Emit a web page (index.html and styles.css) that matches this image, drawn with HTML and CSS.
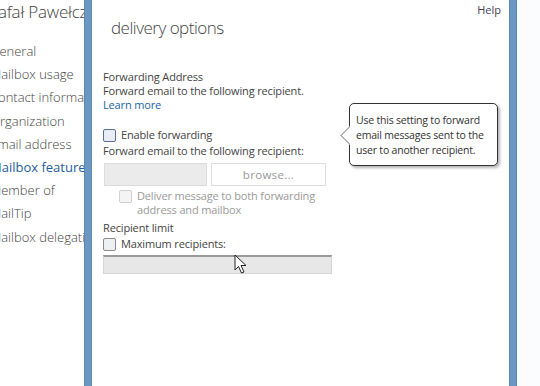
FILE: index.html
```html
<!DOCTYPE html>
<html>
<head>
<meta charset="utf-8">
<link rel="stylesheet" href="styles.css">
</head>
<body>
<div class="screen">
  <aside class="nav">
    <div class="nav-title">Rafał Pawełczyk</div>
    <ul class="nav-list">
      <li>General</li>
      <li>Mailbox usage</li>
      <li>Contact information</li>
      <li>Organization</li>
      <li>Email address</li>
      <li class="active">Mailbox features</li>
      <li>Member of</li>
      <li>MailTip</li>
      <li>Mailbox delegation</li>
    </ul>
  </aside>
  <div class="bar"></div>
  <main class="dialog">
    <header class="dlg-head">
      <h1 class="dlg-title">delivery options</h1>
      <a class="help">Help</a>
    </header>
    <section class="section">
      <div class="label">Forwarding Address</div>
      <div class="label">Forward email to the following recipient.</div>
      <a class="link">Learn more</a>
    </section>
    <section class="section fwd">
      <label class="check"><span class="box"></span>Enable forwarding</label>
      <div class="label">Forward email to the following recipient:</div>
      <div class="row">
        <div class="input"></div>
        <div class="button">browse...</div>
      </div>
      <label class="check sub disabled"><span class="box"></span><span>Deliver message to both forwarding<br>address and mailbox</span></label>
    </section>
    <section class="section limit">
      <div class="label">Recipient limit</div>
      <label class="check"><span class="box"></span>Maximum recipients:</label>
      <div class="input wide"></div>
    </section>
    <div class="tip">
      <span class="tip-arrow"></span>
      <span class="tip-text">Use this setting to forward email messages sent to the user to another recipient.</span>
    </div>
    <svg class="cursor" width="14" height="20" viewBox="0 0 14 20"><path d="M1 1 L1 16 L4.5 12.5 L7.5 19 L10 18 L7 11.5 L12 11.5 Z" fill="#fff" stroke="#222" stroke-width="1"/></svg>
  </main>
  <div class="bar"></div>
  <div class="rest"></div>
</div>
</body>
</html>
```
FILE: styles.css
```css
html, body { margin: 0; padding: 0; background: #fff; }
body { font-family: "Open Sans", "Noto Sans", sans-serif; color: #444; }
.screen { display: flex; width: 540px; height: 386px; overflow: hidden; }
.nav { width: 84px; flex: none; overflow: hidden; white-space: nowrap; background: #fff; }
.nav-title { font-size: 17px; font-weight: 300; color: #444; margin: 1px 0 0 -12px; line-height: 22px; letter-spacing: -0.2px; }
.nav-list { list-style: none; margin: 17px 0 0 -10px; padding: 0; font-size: 13px; font-weight: 300; color: #444; }
.nav-list li { height: 23.2px; line-height: 22px; }
.nav-list li.active { color: #1f5d9e; font-weight: 400; }
.bar { width: 8px; flex: none; background: #6a98c1; box-shadow: inset 1px 0 0 #5a88b3, inset -1px 0 0 #5a88b3; }
.dialog { position: relative; width: 417px; flex: none; padding: 0 0 0 11px; box-sizing: border-box; background: #fff; font-size: 11px; letter-spacing: -0.15px; }
.rest { flex: 1; background: #fbfcfd; }
.dlg-head { display: flex; justify-content: space-between; align-items: flex-start; }
.dlg-title { margin: 16px 0 0 8px; font-size: 17px; font-weight: 300; color: #444; line-height: 24px; letter-spacing: -0.5px; }
.help { margin: 3px 8px 0 0; font-size: 11px; color: #445; line-height: 14px; letter-spacing: 0; }
.section { display: flex; flex-direction: column; align-items: flex-start; }
.dlg-head + .section { margin-top: 30px; }
.label { line-height: 14px; color: #444; }
.link { color: #2064a8; line-height: 14px; }
.fwd { margin-top: 16px; }
.check { display: flex; align-items: flex-start; line-height: 14px; color: #444; }
.box { width: 11px; height: 11px; border: 1px solid #8a8a8a; background: #eef0f3; border-radius: 2px; margin: 1px 5px 0 0; flex: none; }
.fwd > .check:first-child .box { border-color: #5c6f9a; background: #e9ecf2; }
.fwd .label { margin-top: 2px; }
.row { display: flex; gap: 4px; margin: 5px 0 0 1px; }
.input { width: 101px; height: 21px; background: #ebebeb; border: 1px solid #dcdcdc; }
.button { width: 113px; height: 21px; border: 1px solid #dedede; background: #fff; color: #9a9a9a; font-size: 11.5px; text-align: center; line-height: 21px; letter-spacing: 0.3px; }
.sub { margin: 3px 0 0 16px; }
.disabled { color: #9a9a9a; }
.disabled .box { border-color: #d0d0d0; background: #f4f4f4; }
.limit { margin-top: 4px; }
.limit .check { margin-top: 2px; }
.input.wide { width: 227px; height: 16px; margin-top: 4px; background: #e7e7e7; border: 1px solid #d6d6d6; border-top: 2px solid #9a9a9a; }
.tip { position: absolute; left: 257px; top: 103px; width: 135px; padding: 9px 6px 7px 6px; background: #fff; border: 1px solid #333; border-radius: 5px; box-shadow: 2px 2px 3px rgba(0,0,0,0.3); color: #333; font-size: 10.5px; line-height: 15px; letter-spacing: -0.2px; }
.tip-text { position: relative; display: block; }
.tip-arrow { position: absolute; left: -7px; top: 25px; width: 12px; height: 12px; background: #fff; border-left: 1px solid #999; border-bottom: 1px solid #999; transform: rotate(45deg); }
.cursor { position: absolute; left: 142px; top: 254px; }
```
